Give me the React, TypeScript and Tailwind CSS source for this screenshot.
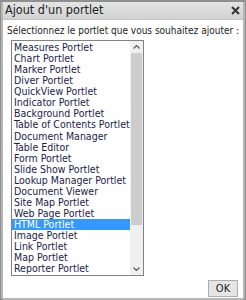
const items = [
  'Measures Portlet',
  'Chart Portlet',
  'Marker Portlet',
  'Diver Portlet',
  'QuickView Portlet',
  'Indicator Portlet',
  'Background Portlet',
  'Table of Contents Portlet',
  'Document Manager',
  'Table Editor',
  'Form Portlet',
  'Slide Show Portlet',
  'Lookup Manager Portlet',
  'Document Viewer',
  'Site Map Portlet',
  'Web Page Portlet',
  'HTML Portlet',
  'Image Portlet',
  'Link Portlet',
  'Map Portlet',
  'Reporter Portlet',
];

export default function App() {
  return (
    <div className="w-[246px] h-[300px] overflow-hidden bg-[#8f8f8f] pt-[2px] font-['DejaVu_Sans_Condensed','DejaVu_Sans',sans-serif]">
      <div className="h-[298px] mx-[1px] border-x-2 border-b-2 border-[#b5b5b5] rounded-b-[3px] bg-white flex flex-col">
        {/* Title bar */}
        <div className="h-[18px] flex items-center justify-between pl-[2px] pr-[3px] bg-gradient-to-b from-[#e4e4e4] to-[#d2d2d2] border-b border-[#c4c4c4]">
          <span className="text-[12.5px] leading-none text-[#222]">Ajout d'un portlet</span>
          <svg width="9" height="9" viewBox="0 0 9 9" className="text-[#333]">
            <path d="M1 1 L8 8 M8 1 L1 8" stroke="currentColor" strokeWidth="2" />
          </svg>
        </div>

        <div className="flex-1 flex flex-col px-[4px] pt-[4px]">
          <p className="text-[10px] leading-[13px] text-[#222] whitespace-nowrap">
            Sélectionnez le portlet que vous souhaitez ajouter :
          </p>

          {/* List box */}
          <div className="mt-[3px] ml-[4px] w-[133px] h-[236px] border border-[#828282] flex bg-white">
            <ul className="flex-1 overflow-hidden pt-[1px] text-[10.5px] leading-[11.07px] text-[#1c1c4c]">
              {items.map((item) => (
                <li
                  key={item}
                  className={`pl-[2px] h-[11.07px] whitespace-nowrap ${item === 'HTML Portlet' ? 'bg-[#3399ff] text-white' : ''}`}
                >
                  {item}
                </li>
              ))}
            </ul>
            {/* Scrollbar */}
            <div className="w-[13px] flex flex-col bg-[#f0f0f0]">
              <div className="h-[12px] flex items-center justify-center">
                <svg width="7" height="4" viewBox="0 0 7 4">
                  <path d="M0.5 3.5 L3.5 0.5 L6.5 3.5" fill="none" stroke="#606060" strokeWidth="1.3" />
                </svg>
              </div>
              <div className="h-[172px] mx-[1px] bg-[#cdcdcd]" />
              <div className="flex-1" />
              <div className="h-[12px] flex items-center justify-center">
                <svg width="7" height="4" viewBox="0 0 7 4">
                  <path d="M0.5 0.5 L3.5 3.5 L6.5 0.5" fill="none" stroke="#606060" strokeWidth="1.3" />
                </svg>
              </div>
            </div>
          </div>

          <div className="flex justify-end mt-[4px] pr-[1px]">
            <button className="w-[30px] h-[17px] border border-[#adadad] bg-[#e5e5e5] text-[11px] leading-none text-[#222]">
              OK
            </button>
          </div>
        </div>
      </div>
    </div>
  );
}
